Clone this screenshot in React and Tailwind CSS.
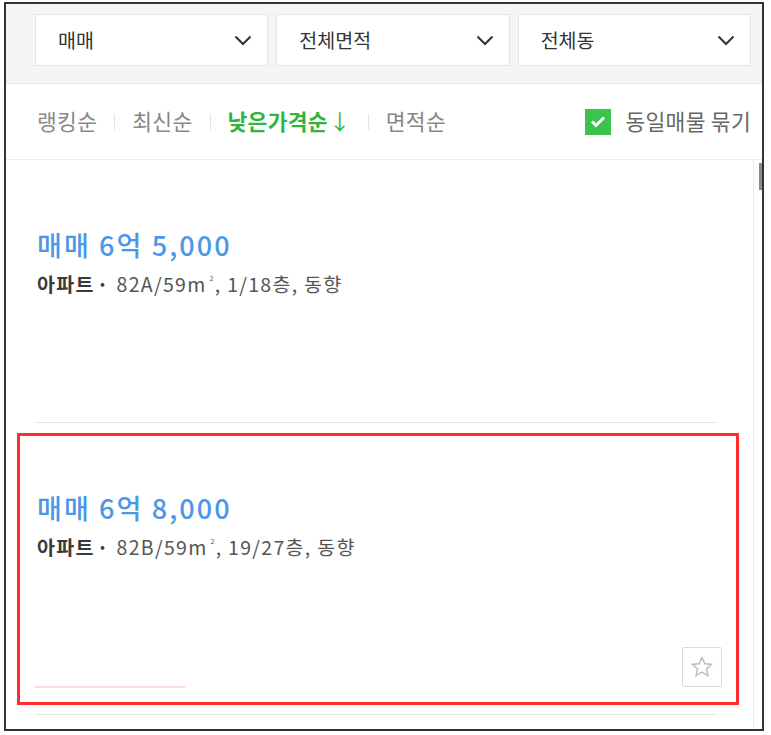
const font = { fontFamily: '"Noto Sans CJK KR", "Noto Sans", sans-serif' }

function Select({ label }) {
  return (
    <div className="h-[52px] bg-white border border-[#e4e4e4] flex items-center justify-between pl-[22px] pr-[15px]">
      <span className="text-[19.5px] text-[#333]">{label}</span>
      <svg width="18" height="11" viewBox="0 0 18 11" fill="none">
        <polyline points="1.5,1.5 9,9 16.5,1.5" stroke="#333" strokeWidth="2" />
      </svg>
    </div>
  )
}

function Sep() {
  return <span className="w-px h-[16px] bg-[#e2e2e2]" />
}

function Listing({ price, area, floor, children, height }) {
  return (
    <div className={`ml-[29px] mr-[36px] border-b border-[#e6e6e6] flex flex-col pt-[68px] ${height}`}>
      <p className="pl-[2px] text-[27px] leading-[34px] tracking-[2.1px] font-medium text-[#4b97e6]">{price}</p>
      <p className="pl-[2px] mt-[9px] text-[19.5px] leading-[26px] tracking-[1.3px] text-[#555]">
        <span className="font-bold text-[#3a3a3a]">아파트</span>
        <span className="font-bold text-[#3a3a3a] ml-[2px] mr-[7px]">·</span>
        {area}
        <sup className="text-[7px] ml-[3px] align-[8px]">2</sup>, {floor}, 동향
      </p>
      {children}
    </div>
  )
}

export default function App() {
  return (
    <div className="bg-white w-[771px] h-[735px] pt-[2px] pl-[4px]" style={font}>
      <div className="relative w-[760px] h-[729px] border-2 border-[#333] flex flex-col overflow-hidden">
        {/* filters */}
        <div className="bg-[#f5f5f5] border-b border-[#e8e8e8] pt-[10px] pb-[17px] pl-[29px] pr-[11px] grid grid-cols-3 gap-2">
          <Select label="매매" />
          <Select label="전체면적" />
          <Select label="전체동" />
        </div>

        {/* sort bar */}
        <div className="h-[76px] border-b border-[#ececec] flex items-center justify-between pl-[31px] pr-[11px] text-[21.5px] tracking-[0.3px]">
          <div className="flex items-center gap-[17px] text-[#888]">
            <span>랭킹순</span>
            <Sep />
            <span>최신순</span>
            <Sep />
            <span className="font-bold text-[#2fb53b]">
              낮은가격순<span className="ml-[1px] font-normal">↓</span>
            </span>
            <Sep />
            <span>면적순</span>
          </div>
          <div className="flex items-center gap-[14px]">
            <span className="w-[26px] h-[26px] bg-[#3cc34b] flex items-center justify-center">
              <svg width="16" height="13" viewBox="0 0 16 13" fill="none">
                <polyline points="2,6.5 6,10.5 14,2.5" stroke="#fff" strokeWidth="3" />
              </svg>
            </span>
            <span className="text-[#666]">동일매물 묶기</span>
          </div>
        </div>

        {/* list */}
        <div className="flex flex-1">
          <div className="flex-1 flex flex-col">
            <Listing price="매매 6억 5,000" area="82A/59m" floor="1/18층" height="h-[263px]" />
            <Listing price="매매 6억 8,000" area="82B/59m" floor="19/27층" height="h-[292px]">
              <div className="mt-auto mb-[27px] flex items-end justify-between -mr-[5px]">
                <span className="w-[150px] h-[2px] bg-[#ffdcdc] mb-[-1px]" />
                <button className="w-[40px] h-[40px] border border-[#dcdcdc] rounded-[2px] flex items-center justify-center">
                  <svg width="24" height="24" viewBox="0 0 24 24" fill="none">
                    <path
                      d="M12 2.5l2.9 6.2 6.6.7-5 4.6 1.4 6.6L12 17.2l-5.9 3.4 1.4-6.6-5-4.6 6.6-.7z"
                      stroke="#bdbdbd"
                      strokeWidth="1.5"
                      strokeLinejoin="miter"
                    />
                  </svg>
                </button>
              </div>
            </Listing>
          </div>
          <div className="w-[9px] border-l border-[#ececec] flex justify-end">
            <span className="w-[3px] h-[27px] mt-[3px] bg-[#8a8a8a]" />
          </div>
        </div>

        {/* highlight annotation */}
        <div className="absolute left-[11px] top-[429px] w-[722px] h-[272px] border-[3px] border-[#ff2d2d] pointer-events-none" />
      </div>
    </div>
  )
}
